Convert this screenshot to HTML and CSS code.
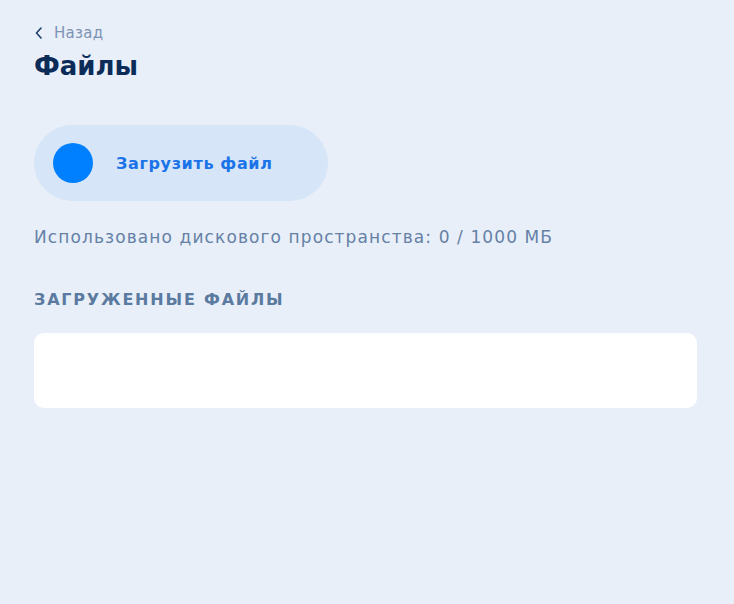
FILE: index.html
```html
<!DOCTYPE html>
<html lang="ru">
<head>
<meta charset="utf-8">
<title>Файлы</title>
<link rel="stylesheet" href="styles.css">
</head>
<body>
<main class="page">
  <a class="back" href="#">
    <svg class="back-icon" width="8" height="12" viewBox="0 0 8 12"><path d="M6 1 L1.5 6 L6 11" fill="none" stroke="#1f3f6e" stroke-width="1.6" stroke-linecap="round" stroke-linejoin="round"/></svg>
    <span>Назад</span>
  </a>
  <h1 class="title">Файлы</h1>
  <button class="upload" type="button">
    <span class="upload-dot"></span>
    <span class="upload-text">Загрузить файл</span>
  </button>
  <p class="usage">Использовано дискового пространства: 0 / 1000 МБ</p>
  <h2 class="section">ЗАГРУЖЕННЫЕ ФАЙЛЫ</h2>
  <div class="card"></div>
</main>
</body>
</html>
```

FILE: styles.css
```css
html, body {
  margin: 0;
  padding: 0;
  background: #e8eff9;
  font-family: "DejaVu Sans", "Open Sans", sans-serif;
}
.page {
  display: flex;
  flex-direction: column;
  align-items: flex-start;
  padding: 23px 37px 0 34px;
}
.back {
  display: flex;
  align-items: center;
  gap: 11px;
  color: #7d93b3;
  text-decoration: none;
  font-size: 15px;
  line-height: 20px;
  letter-spacing: 0.3px;
  padding-left: 1px;
}
.title {
  margin: 5px 0 0;
  font-size: 26px;
  line-height: 36px;
  font-weight: 700;
  color: #0b2b58;
}
.upload {
  margin-top: 41px;
  display: flex;
  align-items: center;
  gap: 23px;
  width: 294px;
  height: 76px;
  padding: 0 19px;
  border: none;
  border-radius: 38px;
  background: #d6e5f7;
  font-family: inherit;
  cursor: pointer;
}
.upload-dot {
  width: 40px;
  height: 40px;
  border-radius: 50%;
  background: #0080ff;
  flex: none;
}
.upload-text {
  color: #1a73e8;
  font-size: 16px;
  font-weight: 600;
  letter-spacing: 0.65px;
}
.usage {
  margin: 24px 0 0;
  font-size: 17px;
  line-height: 24px;
  letter-spacing: 1.1px;
  color: #6581a6;
}
.section {
  margin: 39px 0 0;
  font-size: 16px;
  line-height: 24px;
  font-weight: 700;
  letter-spacing: 1.8px;
  color: #5b7aa0;
}
.card {
  margin-top: 21px;
  align-self: stretch;
  height: 75px;
  background: #ffffff;
  border-radius: 10px;
}
```
